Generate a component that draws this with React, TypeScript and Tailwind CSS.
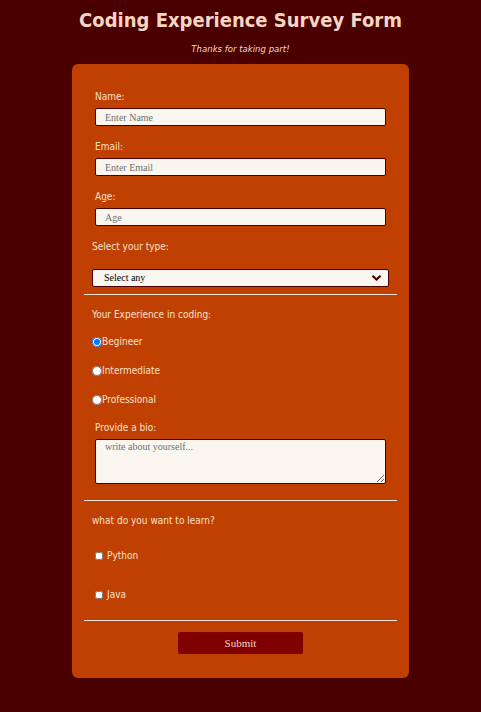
import React from "react";

const sans = { fontFamily: '"DejaVu Sans Condensed", "DejaVu Sans", sans-serif' };

export default function App() {
  return (
    <div
      className="min-h-screen w-full bg-[#4b0000] pb-[34px]"
      style={sans}
    >
      <h1 className="pt-[8px] text-center text-[20px] font-bold leading-[24px] text-[#f6d6c3]">
        Coding Experience Survey Form
      </h1>
      <p className="mt-[11px] text-center text-[9.5px] italic leading-[12px] text-[#f6d6c3]">
        Thanks for taking part!
      </p>
      <form className="mx-auto mt-[9px] w-[337px] rounded-[6px] bg-[#bf4000] px-[12px] pb-[24px] pt-[27px] text-[10px] leading-[12px] text-[#f8e0cc]">
        <div className="pl-[11px] pr-[11px]">
          {[
            ["Name:", "Enter Name"],
            ["Email:", "Enter Email"],
            ["Age:", "Age"],
          ].map(([l, p]) => (
            <div key={l} className="mb-[15px]">
              <label className="block h-[12px]">{l}</label>
              <input
                placeholder={p}
                className="mt-[5px] block h-[18px] w-full rounded-[2px] border border-[#4b0000] bg-[#f9f6ef] pl-[9px] text-[10px] text-black placeholder:text-[#707070] focus:outline-none"
                style={{ fontFamily: '"Liberation Serif", serif' }}
              />
            </div>
          ))}
        </div>
        <div className="pl-[8px] pr-[8px]">
          <label className="block h-[12px]">Select your type:</label>
          <div className="relative mt-[16px] h-[18px]">
            <select
              className="block h-[18px] w-full appearance-none rounded-[2px] border border-[#4b0000] bg-[#f9f6ef] pl-[11px] text-[10px] leading-[16px] text-black focus:outline-none"
              style={{ fontFamily: '"Liberation Serif", serif' }}
            >
              <option>Select any</option>
            </select>
            <svg
              className="pointer-events-none absolute right-[7px] top-[5px]"
              width="11"
              height="8"
              viewBox="0 0 11 8"
            >
              <path d="M1.5 1.8 L5.5 5.6 L9.5 1.8" fill="none" stroke="#4b0000" strokeWidth="2.2" />
            </svg>
          </div>
        </div>
        <hr className="mt-[7px] border-0 border-t border-[#f8e6d8]" />
        <div className="pl-[8px]">
          <p className="mt-[14px] h-[12px]">Your Experience in coding:</p>
          {["Begineer", "Intermediate", "Professional"].map((t, i) => (
            <label
              key={t}
              className={`flex h-[12px] items-center ${i === 0 ? "mt-[15px]" : "mt-[17px]"}`}
            >
              <input
                type="radio"
                name="exp"
                defaultChecked={i === 0}
                className="m-0 h-[10px] w-[10px]"
              />
              <span className="ml-[0px]">{t}</span>
            </label>
          ))}
        </div>
        <div className="pl-[11px] pr-[11px]">
          <label className="mt-[16px] block h-[12px]">Provide a bio:</label>
          <textarea
            placeholder="write about yourself..."
            className="mt-[5px] block h-[45px] w-full rounded-[2px] border border-[#4b0000] bg-[#f9f6ef] pl-[9px] pt-[1px] text-[10px] leading-[12px] text-black placeholder:text-[#707070] focus:outline-none"
            style={{ fontFamily: '"Liberation Serif", serif' }}
          />
        </div>
        <hr className="mt-[16px] border-0 border-t border-[#f8e6d8]" />
        <div className="pl-[8px]">
          <p className="mt-[14px] h-[12px]">what do you want to learn?</p>
          {["Python", "Java"].map((t, i) => (
            <label
              key={t}
              className={`flex h-[12px] items-center pl-[3px] ${i === 0 ? "mt-[23px]" : "mt-[27px]"}`}
            >
              <input type="checkbox" className="m-0 h-[8px] w-[8px]" />
              <span className="ml-[4px]">{t}</span>
            </label>
          ))}
        </div>
        <hr className="mt-[19px] border-0 border-t border-[#f8e6d8]" />
        <div className="flex justify-center">
          <button
            type="button"
            className="mt-[11px] h-[22px] w-[125px] rounded-[2px] bg-[#800000] text-[11px] text-[#f6d6c3]"
            style={{ fontFamily: '"Liberation Serif", serif' }}
          >
            Submit
          </button>
        </div>
      </form>
    </div>
  );
}
